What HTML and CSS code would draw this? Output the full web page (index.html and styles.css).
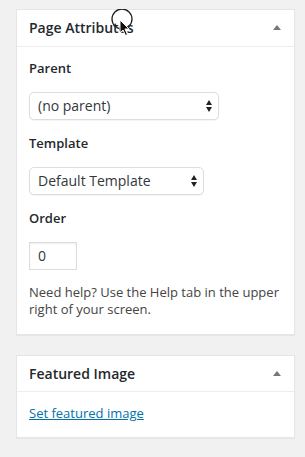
FILE: index.html
```html
<!DOCTYPE html>
<html lang="en">
<head>
    <meta charset="UTF-8">
    <title>Page Attributes</title>
    <link rel="stylesheet" href="styles.css">
</head>
<body>
    <div class="sidebar">
        <div class="postbox">
            <div class="hndle">
                <span>Page Attributes</span>
                <span class="toggle"></span>
            </div>
            <div class="inside">
                <p class="label">Parent</p>
                <div class="select-wrap wide">
                    <select class="field">
                        <option>(no parent)</option>
                    </select>
                    <svg class="arrows" width="6" height="12" viewBox="0 0 6 12"><path d="M3 0L6 5H0z M3 12L0 7H6z" fill="#222"/></svg>
                </div>
                <p class="label">Template</p>
                <div class="select-wrap">
                    <select class="field">
                        <option>Default Template</option>
                    </select>
                    <svg class="arrows" width="6" height="12" viewBox="0 0 6 12"><path d="M3 0L6 5H0z M3 12L0 7H6z" fill="#222"/></svg>
                </div>
                <p class="label">Order</p>
                <input class="order" type="text" value="0">
                <p class="help">Need help? Use the Help tab in the upper right of your screen.</p>
            </div>
        </div>

        <div class="postbox">
            <div class="hndle">
                <span>Featured Image</span>
                <span class="toggle"></span>
            </div>
            <div class="inside">
                <p class="featured"><a href="#">Set featured image</a></p>
            </div>
        </div>
    </div>

    <!-- mouse pointer caught in the screenshot -->
    <svg class="cursor" width="30" height="34" viewBox="0 0 30 34">
        <circle cx="12" cy="10" r="10" fill="none" stroke="#222" stroke-width="1.3"/>
        <path d="M10 11 L10 24 L13 21 L15.5 26.5 L17.5 25.5 L15 20 L19 20 Z" fill="#111" stroke="#fff" stroke-width="1"/>
    </svg>
</body>
</html>
```

FILE: styles.css
```css
body {
    margin: 0;
    background-color: #f1f1f1;
    font-family: "Open Sans", "Liberation Sans", sans-serif;
    font-size: 13px;
    color: #444;
}

div.sidebar {
    padding: 9px 10px 0 16px;
}

div.postbox {
    background-color: #fff;
    border: 1px solid #e5e5e5;
    box-shadow: 0 1px 1px rgba(0, 0, 0, 0.04);
    margin-bottom: 20px;
}

div.postbox div.hndle {
    display: flex;
    justify-content: space-between;
    align-items: center;
    padding: 8px 12px;
    font-size: 14px;
    line-height: 1.4;
    font-weight: 600;
    color: #23282d;
    border-bottom: 1px solid #eee;
}

div.postbox div.hndle span.toggle {
    width: 0;
    height: 0;
    border-left: 4px solid transparent;
    border-right: 4px solid transparent;
    border-bottom: 5px solid #72777c;
    margin-right: 1px;
}

div.postbox div.inside {
    padding: 0 12px 12px;
    margin-top: 11px;
}

div.inside p {
    margin: 0;
}

div.inside p.label {
    font-weight: 600;
    color: #23282d;
    line-height: 20px;
    margin-bottom: 14px;
}

div.inside div.select-wrap {
    position: relative;
    width: 175px;
    margin-bottom: 13px;
}

div.inside div.select-wrap.wide {
    width: 190px;
}

div.inside select.field {
    appearance: none;
    -webkit-appearance: none;
    display: block;
    width: 100%;
    height: 28px;
    padding: 0 20px 0 8px;
    border: 1px solid #ddd;
    border-radius: 5px;
    background-color: #fff;
    box-shadow: 0 1px 1px rgba(0, 0, 0, 0.05);
    font-family: "Open Sans", "Liberation Sans", sans-serif;
    font-size: 14px;
    color: #32373c;
}

div.inside div.select-wrap svg.arrows {
    position: absolute;
    right: 7px;
    top: 8px;
}

div.inside input.order {
    display: block;
    box-sizing: border-box;
    width: 48px;
    height: 28px;
    padding: 0 8px;
    border: 1px solid #ddd;
    box-shadow: inset 0 1px 2px rgba(0, 0, 0, 0.07);
    font-family: "Open Sans", "Liberation Sans", sans-serif;
    font-size: 14px;
    color: #32373c;
    margin-bottom: 14px;
}

div.inside p.help {
    line-height: 17px;
    color: #444;
    margin-bottom: 4px;
}

div.inside p.featured {
    line-height: 20px;
    margin-top: 1px;
    margin-bottom: 2px;
}

div.inside p.featured a {
    color: #0073aa;
}

svg.cursor {
    position: absolute;
    left: 110px;
    top: 9px;
}
```
